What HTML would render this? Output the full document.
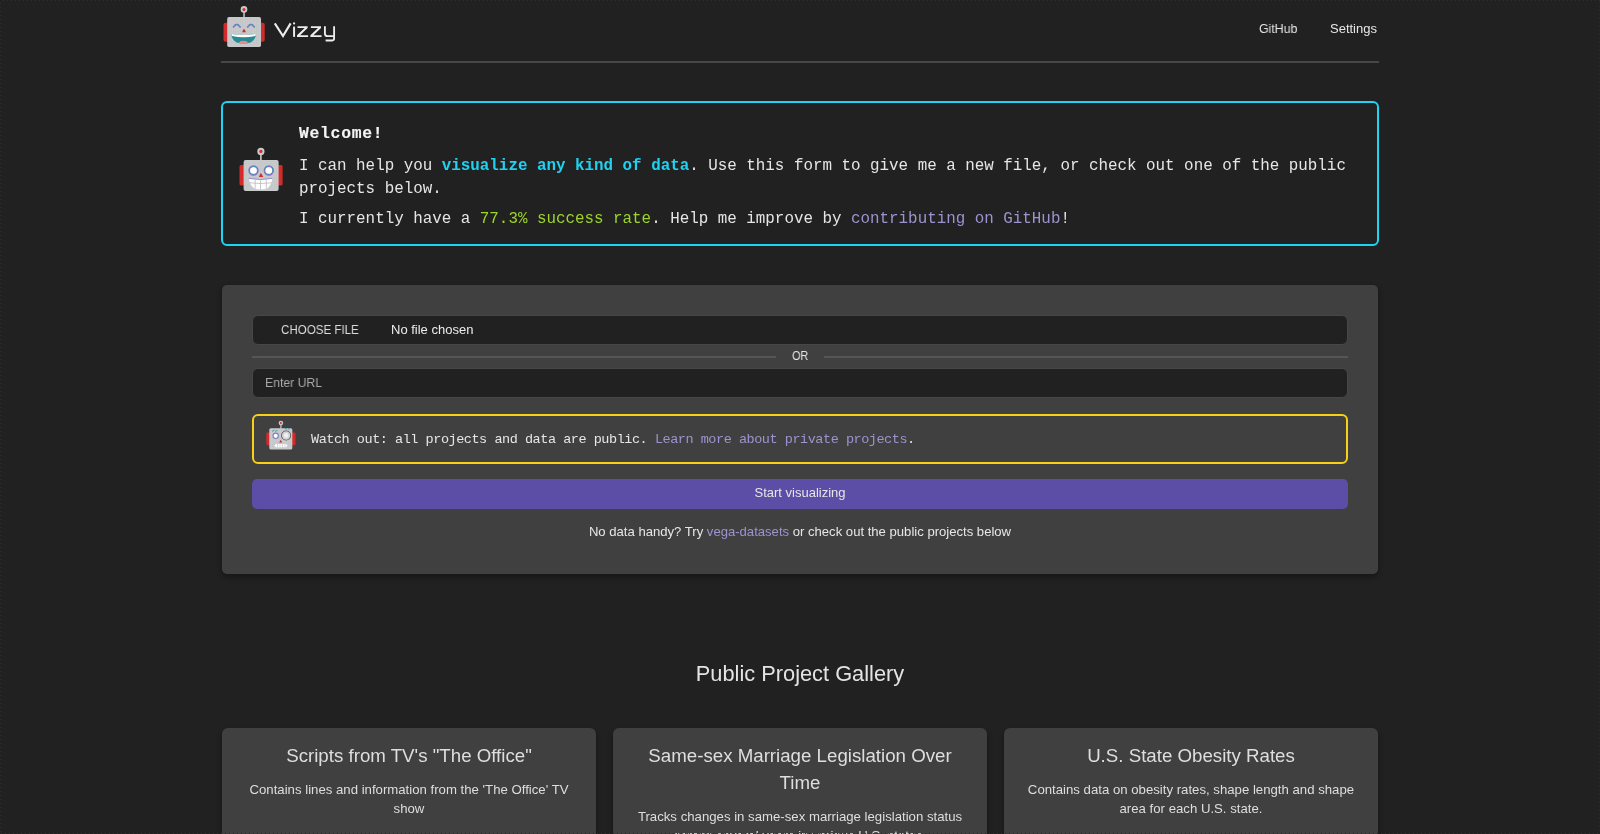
<!DOCTYPE html>
<html>
<head>
<meta charset="utf-8">
<style>
html,body{margin:0;padding:0;}
body{width:1600px;height:834px;overflow:hidden;background:#212121;position:relative;font-family:"Liberation Sans",sans-serif;color:#e8e8e8;}
.abs{position:absolute;will-change:transform;}
.sans{font-family:"Liberation Sans",sans-serif;}
.mono{font-family:"Liberation Mono",monospace;}
.nowrap{white-space:pre;}
#hline{left:221px;top:61px;width:1158px;height:2px;background:#474747;}
#welcome{left:221px;top:101px;width:1154px;height:141px;border:2px solid #1ed4f4;border-radius:6px;}
#panel{left:222px;top:285px;width:1156px;height:289px;background:#404040;border-radius:5px;box-shadow:0 3px 6px rgba(0,0,0,0.16),0 3px 6px rgba(0,0,0,0.23);}
.inp{left:252px;width:1096px;height:30px;box-sizing:border-box;background:#212121;border:1px solid #474747;border-radius:6px;}
#warn{left:252px;top:414px;width:1092px;height:46px;border:2px solid #f7d117;border-radius:6px;}
#btn{left:252px;top:479px;width:1096px;height:30px;background:#5c4ea6;border-radius:5px;}
.card{top:728px;width:374px;height:200px;background:#404040;border-radius:6px;box-shadow:0 3px 6px rgba(0,0,0,0.16),0 3px 6px rgba(0,0,0,0.23);}
.ctitle{top:742.8px;width:374px;text-align:center;font-size:18.7px;line-height:26.75px;color:#dedede;white-space:pre;}
.cdesc{width:374px;text-align:center;font-size:13.2px;line-height:19px;color:#dedede;white-space:pre;}
.t13{font-size:13px;line-height:13px;}
</style>
</head>
<body>
<svg width="0" height="0" style="position:absolute"><defs>
<pattern id="dots" x="0" y="0" width="2.3" height="2.3" patternUnits="userSpaceOnUse"><circle cx="1.15" cy="1.15" r="0.38" fill="#9fa1a4"/></pattern>
</defs></svg>
<!-- header -->
<svg class="abs" style="left:0;top:0" width="400" height="60" viewBox="0 0 400 60">
  <!-- robot logo -->
  <g>
    <rect x="223.5" y="22.8" width="6" height="19" rx="2" fill="#d22b2b"/>
    <rect x="258.7" y="22.8" width="6" height="19" rx="2" fill="#d22b2b"/>
    <rect x="243.3" y="11.5" width="1.5" height="7" fill="#c7c9cb"/>
    <circle cx="244" cy="9.4" r="3.3" fill="#c7c9cb"/>
    <circle cx="244" cy="9.4" r="1.5" fill="#d22b2b"/>
    <rect x="227.2" y="17.1" width="33.8" height="29.9" rx="1.8" fill="#c7c9cb"/><rect x="227.2" y="17.1" width="33.8" height="29.9" rx="1.8" fill="url(#dots)" opacity="0.6"/>
    <path d="M233.2 27.4 Q236.8 21.2 240.4 27.4" stroke="#8479c6" stroke-width="1.7" fill="none"/>
    <path d="M247.4 27.4 Q251 21.2 254.6 27.4" stroke="#8479c6" stroke-width="1.7" fill="none"/>
    <path d="M233.2 27.4 Q236.8 21.2 240.4 27.4 M247.4 27.4 Q251 21.2 254.6 27.4" stroke="#1f9aae" stroke-width="1.1" stroke-dasharray="0.9 2.2" fill="none"/>
    <path d="M242.1 32.2 Q242.6 30.2 244 28.7 Q245.4 30.2 245.9 32.2 Z" fill="#d22b2b"/>
    <path d="M231.4 34 Q243.6 35.8 256 34 Q255.5 40 250.5 42.6 Q243.6 44.8 236.7 42.6 Q231.8 40 231.4 34 Z" fill="#2a8a92"/>
    <path d="M231.4 34 Q243.6 35.8 256 34 L255.3 35.9 Q243.6 38.8 232.1 35.9 Z" fill="#ffffff"/>
    <path d="M238.8 43.2 Q239.5 40.8 243.4 40.8 Q247.3 40.8 248 43.2 Q243.4 44.6 238.8 43.2 Z" fill="#e88a8a"/>
  </g>
  <!-- Vizzy wordmark -->
  <path d="M274.8 23.4 L283 36.1 L290.6 23.4" stroke="#ececec" stroke-width="2.1" fill="none"/>
  <rect x="293.1" y="26.6" width="1.95" height="10.3" fill="#ececec"/>
  <circle cx="294.07" cy="23.45" r="1.1" fill="#ececec"/>
  <path d="M297.5 26.3 H307.6 V27.9 L300.1 35.3 H308.1 V36.9 H297 V35.3 L304.6 27.9 H297.5 Z" fill="#ececec"/>
  <path d="M310.9 26.3 H321 V27.9 L313.5 35.3 H321.5 V36.9 H310.4 V35.3 L318 27.9 H310.9 Z" fill="#ececec"/>
  <path d="M324.9 26.3 V33.4 Q324.9 36.1 327.6 36.1 H334.1 M334.1 26.3 V38.6 Q334.1 40.45 332.3 40.45 H325.6" stroke="#ececec" stroke-width="1.85" fill="none"/>
</svg>
<div class="abs sans nowrap t13" style="left:1258.5px;top:22px;color:#e6e6e6;transform:scaleX(0.95);transform-origin:0 0">GitHub</div>
<div class="abs sans nowrap t13" style="left:1330px;top:22px;color:#e6e6e6">Settings</div>
<div id="hline" class="abs"></div>

<svg class="abs" style="left:234px;top:144px" width="54" height="54" viewBox="0 0 54 54">
  <rect x="5.5" y="21" width="6" height="20.5" rx="1.6" fill="#d42a2a"/>
  <rect x="42.6" y="21" width="6" height="20.5" rx="1.6" fill="#d42a2a"/>
  <rect x="26.1" y="10" width="1.6" height="6.5" fill="#c8cacc"/>
  <circle cx="26.9" cy="7.4" r="3.6" fill="#c8cacc"/>
  <circle cx="26.9" cy="7.4" r="1.6" fill="#d42a2a"/>
  <rect x="9.6" y="15.9" width="35" height="31.1" rx="2" fill="#c8cacc"/><rect x="9.6" y="15.9" width="35" height="31.1" rx="2" fill="url(#dots)" opacity="0.6"/>
  <circle cx="19.5" cy="26.5" r="4.2" fill="none" stroke="#8479c6" stroke-width="2"/>
  <circle cx="19.5" cy="26.5" r="4.2" fill="none" stroke="#1f9aae" stroke-width="1.1" stroke-dasharray="0.9 2.4"/>
  <circle cx="19.5" cy="26.5" r="3.3" fill="#ffffff"/>
  <circle cx="34.8" cy="26.5" r="4.2" fill="none" stroke="#8479c6" stroke-width="2"/>
  <circle cx="34.8" cy="26.5" r="4.2" fill="none" stroke="#1f9aae" stroke-width="1.1" stroke-dasharray="0.9 2.4"/>
  <circle cx="34.8" cy="26.5" r="3.3" fill="#ffffff"/>
  <path d="M24.9 33 Q25.5 31 26.9 29 Q28.3 31 29.2 33 Z" fill="#d42a2a"/>
  <path d="M14.7 34.4 Q26.5 36.6 38.4 34.4 Q37.3 41.5 32.8 44.7 Q26.5 45.8 20.6 44.7 Q16 41.5 14.7 34.4 Z" fill="#ffffff"/>
  <path d="M14.7 34.4 Q26.5 36.6 38.4 34.4" fill="none" stroke="#8f86cc" stroke-width="0.9"/>
  <path d="M21.2 35.6 V44.9 M26.5 36 V45.4 M32.3 35.6 V44.9 M15.6 38.8 Q26.5 40.2 37.6 38.8" fill="none" stroke="#b4b6b9" stroke-width="0.75"/>
</svg>
<!-- welcome -->
<div id="welcome" class="abs"></div>
<div class="abs mono nowrap" style="left:299.3px;top:125.7px;font-size:16.4px;line-height:16.4px;letter-spacing:0.7px;font-weight:bold;color:#f4f4f4;-webkit-text-stroke:0.12px #f4f4f4">Welcome!</div>
<div class="abs mono nowrap" style="left:298.5px;top:154.5px;font-size:15.87px;line-height:22.5px;color:#e6e6e6">I can help you <b style="color:#1fd2f2">visualize any kind of data</b>. Use this form to give me a new file, or check out one of the public
projects below.</div>
<div class="abs mono nowrap" style="left:298.5px;top:207.5px;font-size:15.87px;line-height:22.5px;color:#e6e6e6">I currently have a <span style="color:#9dd52a">77.3% success rate</span>. Help me improve by <span style="color:#9b94cf">contributing on GitHub</span>!</div>

<!-- panel -->
<div id="panel" class="abs"></div>
<div class="abs inp" style="top:315px;"></div>
<div class="abs inp" style="top:368px;"></div>
<div id="warn" class="abs"></div>
<div id="btn" class="abs"></div>
<svg class="abs" style="left:262px;top:418px" width="38" height="38" viewBox="0 0 38 38">
  <rect x="4.3" y="14.6" width="4.5" height="12.7" rx="1.2" fill="#d42a2a"/>
  <rect x="29" y="14.6" width="4.5" height="12.7" rx="1.2" fill="#d42a2a"/>
  <rect x="18.3" y="6.5" width="1.2" height="4.5" fill="#c8cacc"/>
  <circle cx="18.9" cy="5" r="2.3" fill="#c8cacc"/>
  <circle cx="18.9" cy="5" r="1" fill="#d42a2a"/>
  <rect x="7.3" y="10.3" width="23" height="21.1" rx="1.5" fill="#c8cacc"/><rect x="7.3" y="10.3" width="23" height="21.1" rx="1.5" fill="url(#dots)" opacity="0.5"/>
  <circle cx="13.7" cy="17.8" r="3.2" fill="#8479c6"/>
  <circle cx="13.7" cy="17.8" r="2.1" fill="#ffffff"/>
  <circle cx="24.1" cy="17.5" r="5" fill="#5a5a5a"/>
  <circle cx="24.1" cy="17.5" r="4.2" fill="#d0d2d4"/>
  <circle cx="24.1" cy="17.5" r="2.4" fill="#eeeeee"/>
  <path d="M17.3 24.6 Q18 22.6 18.7 21.7 Q19.4 22.6 20.1 24.6 Z" fill="#d42a2a"/>
  <path d="M12.3 27.6 L13.8 26 H24 L25.5 27.6 L24 29.2 H13.8 Z" fill="#ffffff"/>
  <path d="M15.5 26 V29.2 M18 26 V29.2 M20.5 26 V29.2 M23 26 V29.2" stroke="#b9bbbd" stroke-width="0.6"/>
  <path d="M10 13.5 L12.5 12 M13 13.2 L15.5 12.6 M23 10.8 H25 M26 10.8 H28" stroke="#2a9fb0" stroke-width="0.9"/>
</svg>
<div class="abs" style="left:252px;top:356px;width:524px;height:2px;background:#555"></div>
<div class="abs" style="left:824px;top:356px;width:524px;height:2px;background:#555"></div>
<div class="abs sans nowrap t13" style="left:792px;top:349.15px;color:#e6e6e6;transform:scaleX(0.84);transform-origin:0 0">OR</div>
<div class="abs sans nowrap t13" style="left:280.5px;top:323px;color:#dcdcdc;transform:scaleX(0.89);transform-origin:0 0">CHOOSE FILE</div>
<div class="abs sans nowrap t13" style="left:390.5px;top:323px;color:#ececec">No file chosen</div>
<div class="abs sans nowrap t13" style="left:265px;top:375.75px;color:#a9a9a9;transform:scaleX(0.94);transform-origin:0 0">Enter URL</div>
<div class="abs mono nowrap" style="left:310.7px;top:433.2px;font-size:13.5px;line-height:13.5px;letter-spacing:-0.46px;color:#e6e6e6">Watch out: all projects and data are public. <span style="color:#9b94cf">Learn more about private projects</span>.</div>
<div class="abs sans nowrap t13" style="left:0;width:1600px;text-align:center;top:486.45px;color:#e6e6e6">Start visualizing</div>
<div class="abs sans nowrap t13" style="left:0;width:1600px;text-align:center;top:525.4px;font-size:13.1px;line-height:13.1px;color:#e6e6e6">No data handy? Try <span style="color:#9b94cf">vega-datasets</span> or check out the public projects below</div>

<!-- gallery -->
<div class="abs sans nowrap" style="left:0;width:1600px;text-align:center;top:662.9px;font-size:21.8px;line-height:21.8px;color:#e4e4e4">Public Project Gallery</div>
<div class="abs card" style="left:222px"></div>
<div class="abs card" style="left:613px"></div>
<div class="abs card" style="left:1004px"></div>
<div class="abs sans ctitle" style="left:222px">Scripts from TV's "The Office"</div>
<div class="abs sans cdesc" style="left:222px;top:779.7px">Contains lines and information from the 'The Office' TV<br>show</div>
<div class="abs sans ctitle" style="left:613px">Same-sex Marriage Legislation Over<br>Time</div>
<div class="abs sans cdesc" style="left:613px;top:806.5px">Tracks changes in same-sex marriage legislation status<br>across several years in various U.S. states.</div>
<div class="abs sans ctitle" style="left:1004px">U.S. State Obesity Rates</div>
<div class="abs sans cdesc" style="left:1004px;top:779.7px">Contains data on obesity rates, shape length and shape<br>area for each U.S. state.</div>
<div class="abs" style="left:0;top:0;width:1600px;height:1px;background:repeating-linear-gradient(90deg,transparent 0 3px,#2e2e2e 3px 4px)"></div>
<div class="abs" style="left:0;top:0;width:1px;height:834px;background:repeating-linear-gradient(180deg,transparent 0 3px,#2e2e2e 3px 4px)"></div>
<div class="abs" style="left:1599px;top:0;width:1px;height:834px;background:repeating-linear-gradient(180deg,transparent 0 2px,#2e2e2e 2px 3px,transparent 3px 4px)"></div>
<div class="abs" style="left:0;top:833px;width:1600px;height:1px;background:repeating-linear-gradient(90deg,transparent 0 1px,#2e2e2e 1px 2px,transparent 2px 4px)"></div>
</body>
</html>
